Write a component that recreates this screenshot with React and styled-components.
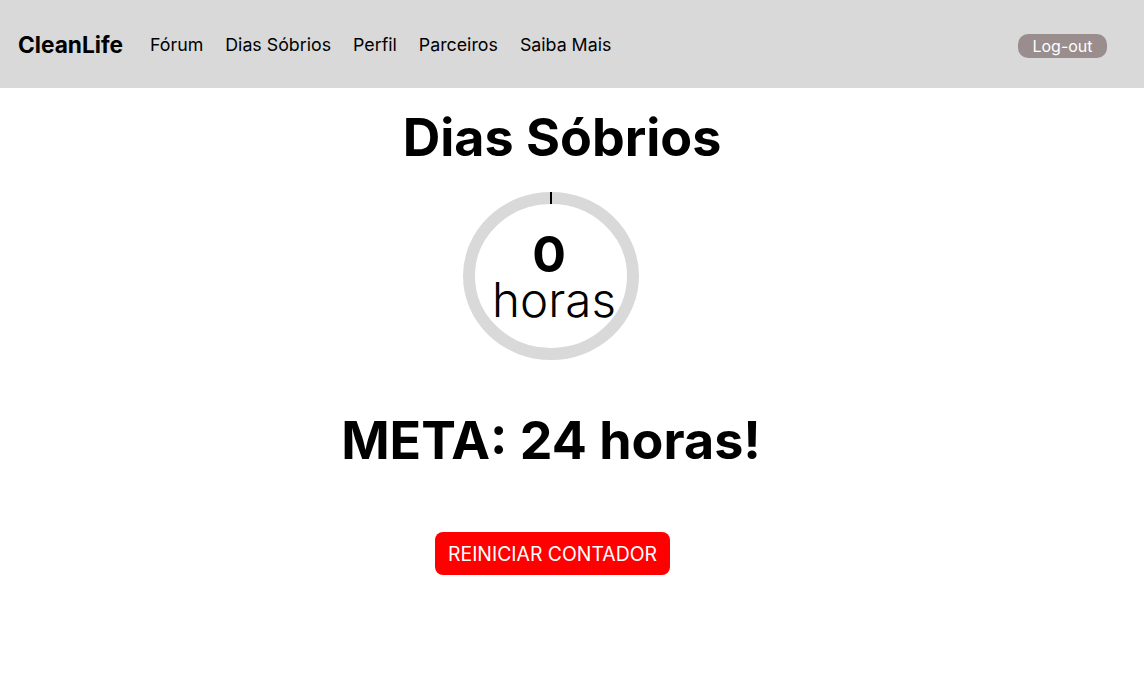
import React from 'react';
import styled, { createGlobalStyle } from 'styled-components';

const GlobalStyle = createGlobalStyle`
  * { box-sizing: border-box; }
  body {
    margin: 0;
    background: #fff;
    font-family: Inter, "Liberation Sans", sans-serif;
    color: #000;
  }
`;

const Header = styled.header`
  height: 88px;
  background: #d9d9d9;
  display: flex;
  align-items: center;
  padding: 0 37px 0 18px;
`;

const Brand = styled.div`
  font-size: 22.7px;
  font-weight: 700;
  margin-right: 27px;
`;

const Nav = styled.nav`
  display: flex;
  gap: 22px;
  flex: 1;
`;

const NavLink = styled.a`
  font-size: 17.8px;
  color: #000;
  text-decoration: none;
  cursor: pointer;
`;

const LogoutButton = styled.button`
  width: 89px;
  height: 24px;
  border: none;
  border-radius: 10px;
  background: #998d8d;
  color: #fff;
  font-family: inherit;
  font-size: 16px;
  padding: 0;
  margin-top: 4px;
  cursor: pointer;
`;

const Main = styled.main`
  display: flex;
  flex-direction: column;
  align-items: center;
  padding-right: 42px;
`;

const Title = styled.h1`
  margin: 20px 0 0 22px;
  font-size: 52px;
  font-weight: 700;
  line-height: 60px;
`;

const Counter = styled.div`
  position: relative;
  width: 176px;
  height: 168px;
  margin-top: 24px;
  display: flex;
  flex-direction: column;
  align-items: center;
  justify-content: center;
`;

const Ring = styled.svg`
  position: absolute;
  inset: 0;
`;

const Count = styled.div`
  position: relative;
  font-size: 50px;
  font-weight: 700;
  line-height: 48px;
  margin-right: 4px;
`;

const Unit = styled.div`
  position: relative;
  font-size: 47.5px;
  font-weight: 300;
  line-height: 44px;
  margin-left: 6px;
`;

const Goal = styled.h2`
  margin: 47px 0 0;
  font-size: 52px;
  font-weight: 700;
  line-height: 68px;
`;

const ResetButton = styled.button`
  margin: 57px 0 0 3px;
  width: 235px;
  height: 43px;
  border: none;
  border-radius: 8px;
  background: #ff0000;
  color: #fff;
  font-family: inherit;
  font-size: 19.4px;
  padding: 0;
  cursor: pointer;
`;

export default function App() {
  const hours = 0;
  return (
    <>
      <GlobalStyle />
      <Header>
        <Brand>CleanLife</Brand>
        <Nav>
          {['Fórum', 'Dias Sóbrios', 'Perfil', 'Parceiros', 'Saiba Mais'].map(item => (
            <NavLink key={item}>{item}</NavLink>
          ))}
        </Nav>
        <LogoutButton>Log-out</LogoutButton>
      </Header>
      <Main>
        <Title>Dias Sóbrios</Title>
        <Counter>
          <Ring width="176" height="168" viewBox="0 0 176 168">
            <ellipse cx="88" cy="84" rx="82" ry="78" fill="none" stroke="#d9d9d9" strokeWidth="12" />
            <line x1="88" y1="0" x2="88" y2="12" stroke="#000" strokeWidth="2" />
          </Ring>
          <Count>{hours}</Count>
          <Unit>horas</Unit>
        </Counter>
        <Goal>META: 24 horas!</Goal>
        <ResetButton>REINICIAR CONTADOR</ResetButton>
      </Main>
    </>
  );
}
